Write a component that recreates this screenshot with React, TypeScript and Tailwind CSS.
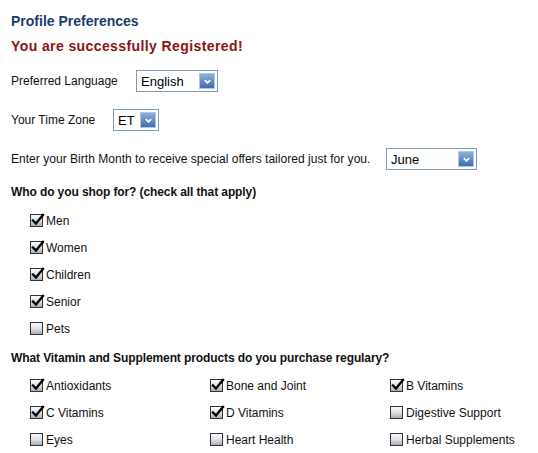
import React from "react";

type Opt = { label: string; checked: boolean };

const shopFor: Opt[] = [
  { label: "Men", checked: true },
  { label: "Women", checked: true },
  { label: "Children", checked: true },
  { label: "Senior", checked: true },
  { label: "Pets", checked: false },
];

const vitamins: Opt[] = [
  { label: "Antioxidants", checked: true },
  { label: "Bone and Joint", checked: true },
  { label: "B Vitamins", checked: true },
  { label: "C Vitamins", checked: true },
  { label: "D Vitamins", checked: true },
  { label: "Digestive Support", checked: false },
  { label: "Eyes", checked: false },
  { label: "Heart Health", checked: false },
  { label: "Herbal Supplements", checked: false },
];

function Box({ checked }: { checked: boolean }) {
  return (
    <span className="relative w-[13px] h-[13px] shrink-0 border border-[#333] bg-gradient-to-b from-[#fafafa] via-[#dfe1e6] to-[#a9adb8]">
      {checked && (
        <svg viewBox="0 0 14 14" className="absolute left-[0px] top-[-2px] w-[14px] h-[14px]">
          <path d="M2 7.5 L5 10.5 L12 2" fill="none" stroke="#000" strokeWidth="2.4" strokeLinecap="square" />
        </svg>
      )}
    </span>
  );
}

function Check({ opt }: { opt: Opt }) {
  return (
    <div className="flex items-center h-[27px] gap-[3px]">
      <Box checked={opt.checked} />
      <span className="text-[12px] text-[#111]">{opt.label}</span>
    </div>
  );
}

function Select({ value, width }: { value: string; width: string }) {
  return (
    <div className={`${width} h-[22px] flex items-center justify-between border border-[#7f9db9] bg-white pl-[4px] pr-[2px]`}>
      <span className="text-[13px] text-black leading-none">{value}</span>
      <span className="w-[16px] h-[16px] flex items-center justify-center border border-[#b3c6e6] bg-gradient-to-b from-[#8fb0dd] to-[#3f6eae]">
        <svg viewBox="0 0 10 10" className="w-[9px] h-[9px]">
          <path d="M2 3.5 L5 6.5 L8 3.5" fill="none" stroke="#fff" strokeWidth="1.8" />
        </svg>
      </span>
    </div>
  );
}

export default function App() {
  return (
    <div className="w-[538px] h-[453px] bg-white pl-[11px] pt-[13px] font-['Liberation_Sans',Arial,sans-serif] text-[#111] overflow-hidden">
      <h1 className="h-[17px] leading-[17px] text-[14px] font-bold text-[#1c3d6b]">Profile Preferences</h1>
      <p className="mt-[8px] h-[17px] leading-[17px] text-[14px] font-bold text-[#8b1414] tracking-[0.4px]">
        You are successfully Registered!
      </p>

      <div className="mt-[15px] h-[22px] flex items-center text-[12px]">
        <span className="w-[125px]">Preferred Language</span>
        <Select value="English" width="w-[82px]" />
      </div>
      <div className="mt-[17px] h-[22px] flex items-center text-[12px]">
        <span className="w-[102px]">Your Time Zone</span>
        <Select value="ET" width="w-[46px]" />
      </div>
      <div className="mt-[17px] h-[22px] flex items-center text-[12px]">
        <span className="w-[375px] tracking-[0.03px]">Enter your Birth Month to receive special offers tailored just for you.</span>
        <Select value="June" width="w-[91px]" />
      </div>

      <p className="mt-[15px] h-[15px] leading-[15px] text-[12px] font-bold tracking-[-0.1px]">Who do you shop for? (check all that apply)</p>
      <div className="mt-[7px] ml-[19px] flex flex-col">
        {shopFor.map((o) => (
          <Check key={o.label} opt={o} />
        ))}
      </div>

      <p className="mt-[9px] h-[15px] leading-[15px] text-[12px] font-bold tracking-[-0.1px]">
        What Vitamin and Supplement products do you purchase regulary?
      </p>
      <div className="mt-[6px] ml-[19px] grid grid-cols-[180px_180px_180px]">
        {vitamins.map((o) => (
          <Check key={o.label} opt={o} />
        ))}
      </div>
    </div>
  );
}
